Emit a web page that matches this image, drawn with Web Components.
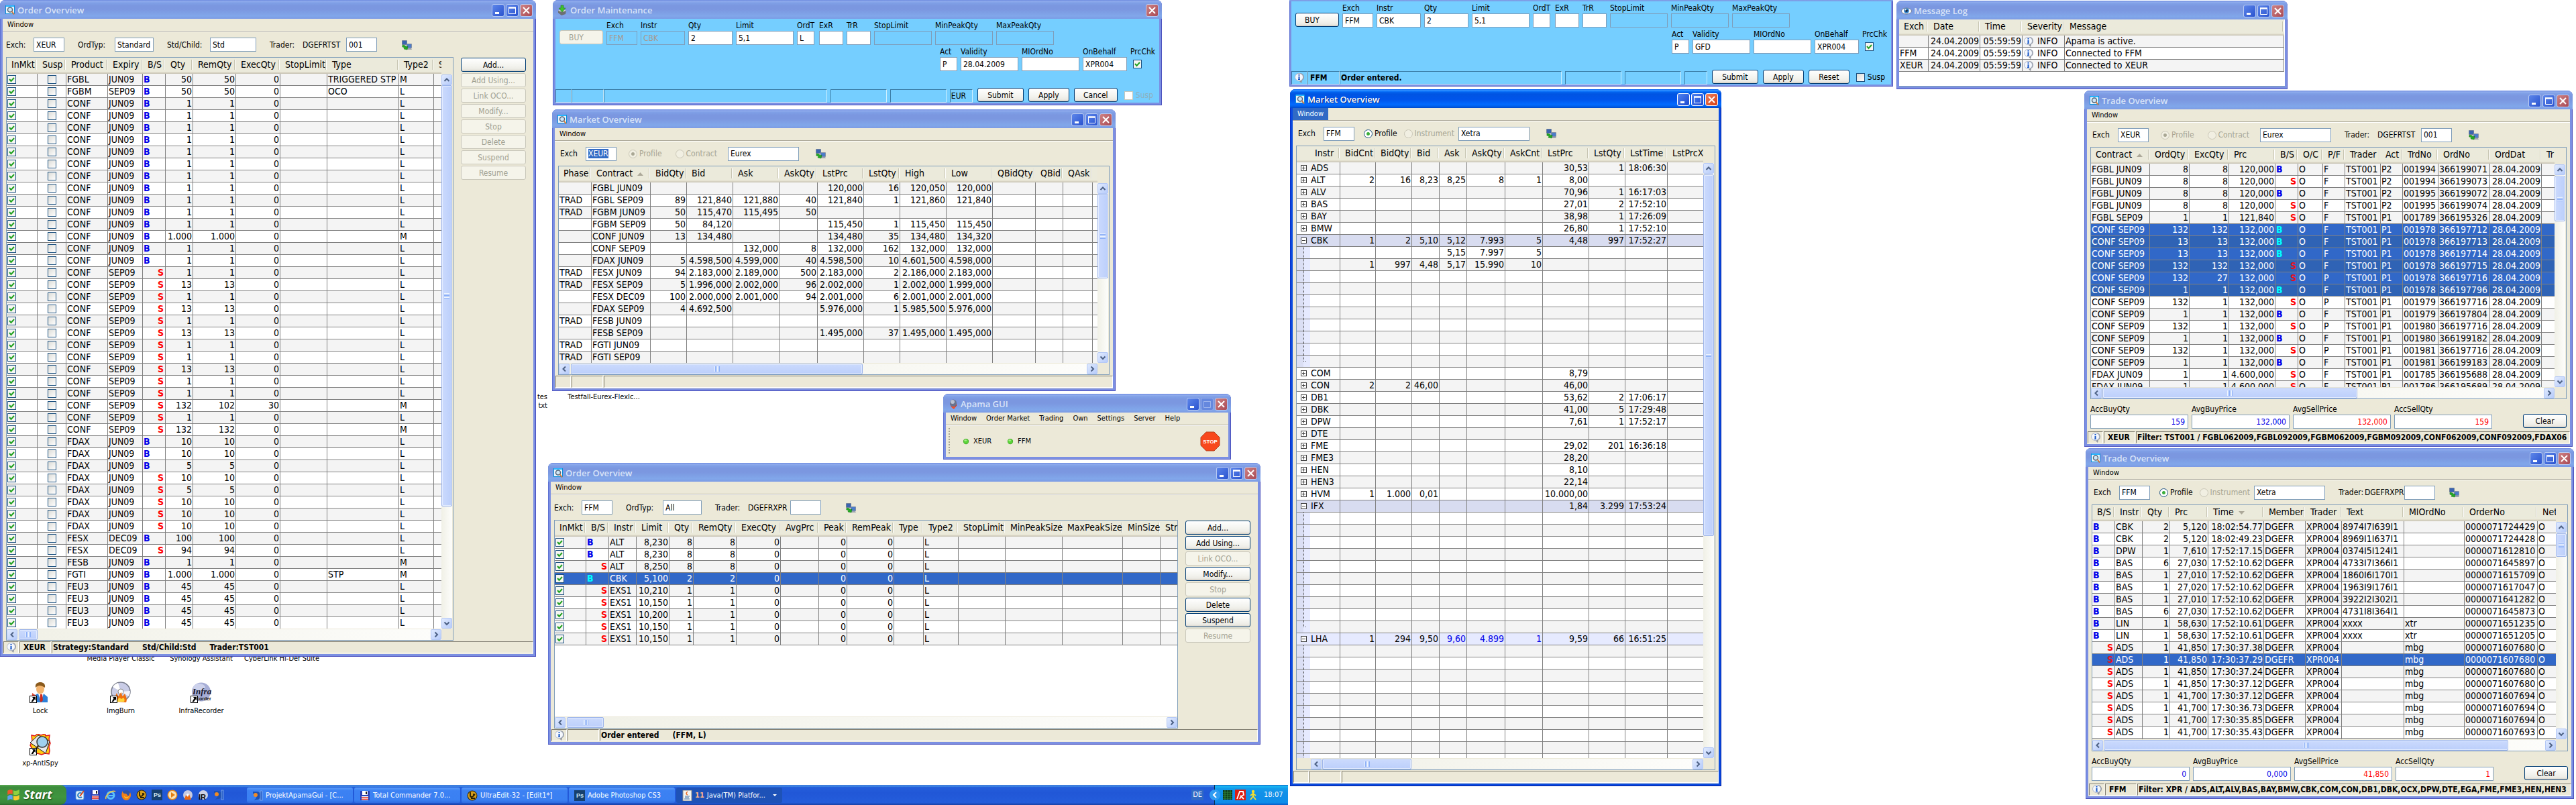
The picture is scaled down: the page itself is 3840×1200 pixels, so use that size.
<!DOCTYPE html>
<html lang="en">
<head>
<meta charset="utf-8">
<title>Trading Desktop</title>
<style>
html,body{margin:0;height:100%;background:#fff}
body{font-family:"DejaVu Sans Condensed","DejaVu Sans",sans-serif;font-size:12px;line-height:14px;color:#000;overflow:hidden}
</style>
</head>
<body>
<xp-desktop>
  <xp-shortcut label="tes" label2="txt" at="7 / 7" edge></xp-shortcut>
  <xp-shortcut label="Testfall-Eurex-FlexIc..." at="7 / 8"></xp-shortcut>
  <xp-shortcut label="Media Player Classic" at="12 / 2"></xp-shortcut>
  <xp-shortcut label="Synology Assistant" at="12 / 3"></xp-shortcut>
  <xp-shortcut label="CyberLink Hi-Def Suite" at="12 / 4"></xp-shortcut>
  <xp-shortcut label="Lock" icon="lock" at="13 / 1"></xp-shortcut>
  <xp-shortcut label="ImgBurn" icon="imgburn" at="13 / 2"></xp-shortcut>
  <xp-shortcut label="InfraRecorder" icon="infra" at="13 / 3"></xp-shortcut>
  <xp-shortcut label="xp-AntiSpy" icon="antispy" at="14 / 1"></xp-shortcut>

  <xp-window slot="win" name="Order Overview" icon="find" box="0 0 799 979">
    <xp-menu items="Window"></xp-menu>
    <xp-toolbar style="height:37px">
      <xp-field label="Exch:" value="XEUR" lw="41" iw="46"></xp-field>
      <xp-field label="OrdTyp:" value="Standard" lw="55" iw="58" style="margin-left:20px"></xp-field>
      <xp-field label="Std/Child:" value="Std" lw="64" iw="69" style="margin-left:20px"></xp-field>
      <xp-field label="Trader:" note="DGEFRTST" value="001" lw="49" nw="65" iw="46" style="margin-left:20px"></xp-field>
      <xp-icon name="net" style="margin-left:36px"></xp-icon>
    </xp-toolbar>
    <xp-split>
      <xp-grid data="ordersXeur" v="0 628" h="2 28"></xp-grid>
      <xp-actions slot="side" on="Add..."></xp-actions>
    </xp-split>
    <xp-status info code="XEUR"><span>Strategy:Standard</span><span>Std/Child:Std</span><span>Trader:TST001</span></xp-status>
  </xp-window>

  <xp-window slot="win" name="Order Maintenance" icon="order" box="824 0 908 157" controls="x" style="--body:#75ceff">
    <xp-order-form locked exch="FFM" ordt="L" validity="28.04.2009" ccy="EUR" last="Cancel"></xp-order-form>
  </xp-window>

  <xp-window slot="win" name="Market Overview" icon="find" box="823 163 840 420">
    <xp-menu items="Window"></xp-menu>
    <xp-toolbar>
      <xp-field label="Exch" value="XEUR" lw="38" iw="46" selected style="margin-left:3px"></xp-field>
      <xp-radio label="Profile" on off style="margin-left:18px"></xp-radio>
      <xp-radio label="Contract" off style="margin-left:20px"></xp-radio>
      <xp-field name="Profile name" value="Eurex" iw="106" style="margin-left:16px"></xp-field>
      <xp-icon name="net" style="margin-left:24px"></xp-icon>
    </xp-toolbar>
    <xp-split><xp-grid data="marketXeur" v="0 126" h="2 435"></xp-grid></xp-split>
    <xp-status></xp-status>
  </xp-window>

  <xp-window slot="win" name="Apama GUI" icon="apama" box="1406 587 429 98" controls="_mx">
    <xp-menu items="Window,Order Market,Trading,Own,Settings,Server,Help"></xp-menu>
    <xp-server-bar></xp-server-bar>
  </xp-window>

  <xp-window slot="win" name="Order Overview" icon="find" box="817 690 1062 420">
    <xp-menu items="Window"></xp-menu>
    <xp-toolbar style="height:37px">
      <xp-field label="Exch:" value="FFM" lw="41" iw="46"></xp-field>
      <xp-field label="OrdTyp:" value="All" lw="55" iw="58" style="margin-left:20px"></xp-field>
      <xp-field label="Trader:" note="DGEFRXPR" value="" lw="49" nw="63" iw="46" style="margin-left:20px"></xp-field>
      <xp-icon name="net" style="margin-left:36px"></xp-icon>
    </xp-toolbar>
    <xp-split>
      <xp-grid data="ordersFfm" h="2 55"></xp-grid>
      <xp-actions slot="side" on="Add...,Add Using...,Modify...,Delete,Suspend"></xp-actions>
    </xp-split>
    <xp-status info><span>Order entered</span><span>(FFM, L)</span></xp-status>
  </xp-window>

  <xp-window slot="win" name="Order Maintenance" icon="order" box="1922 -26 900 155" controls="x" style="--body:#75ceff;--frame:3px">
    <xp-order-form exch="FFM" ordt="" validity="GFD" code="FFM" message="Order entered." last="Reset" info></xp-order-form>
  </xp-window>

  <xp-window slot="win" active name="Market Overview" icon="find" box="1923 133 643 1039">
    <xp-menu items="Window" open></xp-menu>
    <xp-toolbar>
      <xp-field label="Exch" value="FFM" lw="38" iw="46" style="margin-left:3px"></xp-field>
      <xp-radio label="Profile" on style="margin-left:14px"></xp-radio>
      <xp-radio label="Instrument" off style="margin-left:10px"></xp-radio>
      <xp-field name="Profile name" value="Xetra" iw="106" style="margin-left:6px"></xp-field>
      <xp-icon name="net" style="margin-left:24px"></xp-icon>
    </xp-toolbar>
    <xp-split><xp-grid data="marketFfm" v="1 539" h="1 133" indent></xp-grid></xp-split>
    <xp-status></xp-status>
  </xp-window>

  <xp-window slot="win" name="Message Log" icon="eye" box="2827 1 583 132">
    <xp-grid data="log" bare></xp-grid>
  </xp-window>

  <xp-window slot="win" name="Trade Overview" icon="find" box="3107 135 728 531">
    <xp-menu items="Window"></xp-menu>
    <xp-toolbar>
      <xp-field label="Exch" value="XEUR" lw="38" iw="46" style="margin-left:3px"></xp-field>
      <xp-radio label="Profile" on off style="margin-left:18px"></xp-radio>
      <xp-radio label="Contract" off style="margin-left:20px"></xp-radio>
      <xp-field name="Profile name" value="Eurex" iw="106" style="margin-left:16px"></xp-field>
      <xp-field label="Trader:" note="DGEFRTST" value="001" lw="49" nw="65" iw="46" style="margin-left:20px"></xp-field>
      <xp-icon name="net" style="margin-left:24px"></xp-icon>
    </xp-toolbar>
    <xp-split><xp-grid data="tradesXeur" v="1 68" h="1 380"></xp-grid></xp-split>
    <xp-totals values="159,132.000,132.000,159"></xp-totals>
    <xp-status info code="XEUR"><span>Filter: TST001 / FGBL062009,FGBL092009,FGBM062009,FGBM092009,CONF062009,CONF092009,FDAX06</span></xp-status>
  </xp-window>

  <xp-window slot="win" name="Trade Overview" icon="find" box="3109 668 728 523">
    <xp-menu items="Window"></xp-menu>
    <xp-toolbar>
      <xp-field label="Exch" value="FFM" lw="38" iw="46" style="margin-left:3px"></xp-field>
      <xp-radio label="Profile" on style="margin-left:14px"></xp-radio>
      <xp-radio label="Instrument" off style="margin-left:10px"></xp-radio>
      <xp-field name="Profile name" value="Xetra" iw="106" style="margin-left:6px"></xp-field>
      <xp-field label="Trader:" note="DGEFRXPR" value="" lw="39" nw="59" iw="46" style="margin-left:20px"></xp-field>
      <xp-icon name="net" style="margin-left:20px"></xp-icon>
    </xp-toolbar>
    <xp-split><xp-grid data="tradesFfm" v="1 35" h="1 603"></xp-grid></xp-split>
    <xp-totals values="0,0.000,41.850,1"></xp-totals>
    <xp-status info code="FFM"><span>Filter: XPR / ADS,ALT,ALV,BAS,BAY,BMW,CBK,COM,CON,DB1,DBK,OCX,DPW,DTE,EGA,FME,FME3,HEN,HEN3</span></xp-status>
  </xp-window>

  <xp-taskbar slot="bar"></xp-taskbar>
</xp-desktop>

<script>
/* ---------- grid data: columns are "title:width:kind", rows are pipe separated ---------- */
const rep = (n, s) => Array(n).fill(s);
const ox = (p, e, s, q, t2 = 'L', t = '', r = q, x = '0') => `1|0|${p}|${e}|${s}|${q}|${r}|${x}||${t}|${t2}|`;
const DATA = {
  ordersXeur: {
    cols: 'InMkt:46:c,Susp:43:m,Product:62:l,Expiry:52:l,B/S:34:s,Qty:41:r,RemQty:64:r,ExecQty:66:r,StopLimit:70:r,Type:107:l,Type2:52:l,S:40:l',
    rows: [
      ox('FGBL','JUN09','B','50','M','TRIGGERED STP'), ox('FGBM','SEP09','B','50','L','OCO'),
      ...rep(11, ox('CONF','JUN09','B','1')), ox('CONF','JUN09','B','1.000','M'), ...rep(2, ox('CONF','JUN09','B','1')),
      ...['1','13','1','13','1','13','1','1','13','1','1'].map(q => ox('CONF','SEP09','S',q)),
      ox('CONF','SEP09','S','132','M','','102','30'), ox('CONF','SEP09','S','1'), ox('CONF','SEP09','S','132','M'),
      ...['10','10','5'].map(q => ox('FDAX','JUN09','B',q)), ...['10','5','10','10','10'].map(q => ox('FDAX','JUN09','S',q)),
      ox('FESX','DEC09','B','100'), ox('FESX','DEC09','S','94'), ox('FESB','JUN09','B','1','M'),
      ox('FGTI','JUN09','B','1.000','M','STP'), ...rep(4, ox('FEU3','JUN09','B','45'))
    ]
  },
  marketXeur: {
    cols: 'Phase:49:l,Contract ^:88:l,BidQty:54:r,Bid:69:r,Ask:69:r,AskQty:57:r,LstPrc:69:r,LstQty:54:r,High:69:r,Low:69:r,QBidQty:64:r,QBid:41:r,QAsk:44:r,:40:l',
    rows: `|FGBL JUN09|||||120,000|16|120,050|120,000
TRAD|FGBL SEP09|89|121,840|121,880|40|121,840|1|121,860|121,840
TRAD|FGBM JUN09|50|115,470|115,495|50
|FGBM SEP09|50|84,120|||115,450|1|115,450|115,450
|CONF JUN09|13|134,480|||134,480|35|134,480|134,320
|CONF SEP09|||132,000|8|132,000|162|132,000|132,000
|FDAX JUN09|5|4.598,500|4.599,000|40|4.598,500|10|4.601,500|4.598,000
TRAD|FESX JUN09|94|2.183,000|2.189,000|500|2.183,000|2|2.186,000|2.183,000
TRAD|FESX SEP09|5|1.996,000|2.002,000|96|2.002,000|1|2.002,000|1.999,000
|FESX DEC09|100|2.000,000|2.001,000|94|2.001,000|6|2.001,000|2.001,000
|FDAX SEP09|4|4.692,500|||5.976,000|1|5.985,500|5.976,000
TRAD|FESB JUN09
|FESB SEP09|||||1.495,000|37|1.495,000|1.495,000
TRAD|FGTI JUN09
TRAD|FGTI SEP09`.split('\n')
  },
  ordersFfm: {
    cols: 'InMkt:47:c,B/S:34:s,Instr:41:l,Limit:49:r,Qty:36:r,RemQty:64:r,ExecQty:66:r,AvgPrc:57:r,Peak:42:r,RemPeak:70:r,Type:44:l,Type2:52:l,StopLimit:70:r,MinPeakSize:85:r,MaxPeakSize:90:r,MinSize:56:r,Str:60:l',
    rows: [['B','ALT','8,230','8'],['B','ALT','8,230','8'],['S','ALT','8,250','8'],['B','CBK','5,100','2'],['S','EXS1','10,210','1'],
      ['S','EXS1','10,150','1'],['S','EXS1','10,200','1'],['S','EXS1','10,150','1'],['S','EXS1','10,150','1']]
      .map(([s,i,l,q]) => `1|${s}|${i}|${l}|${q}|${q}|0||0|0||L`),
    sel: [3]
  },
  marketFfm: {
    cols: 'Instr:65:t,BidCnt:53:r,BidQty:54:r,Bid:41:r,Ask:41:r,AskQty:57:r,AskCnt:56:r,LstPrc:69:r,LstQty:54:r,LstTime:63:r,LstPrcX:80:r',
    rows: [...`+ADS|||||||30,53|1|18:06:30
+ALT|2|16|8,23|8,25|8|1|8,00
+ALV|||||||70,96|1|16:17:03
+BAS|||||||27,01|2|17:52:10
+BAY|||||||38,98|1|17:26:09
+BMW|||||||26,80|1|17:52:10
-CBK|1|2|5,10|5,12|7.993|5|4,48|997|17:52:27
.||||5,15|7.997|5
.|1|997|4,48|5,17|15.990|10`.split('\n'), ...rep(7, '.'), '_',
      ...`+COM|||||||8,79
+CON|2|2|46,00||||46,00
+DB1|||||||53,62|2|17:06:17
+DBK|||||||41,00|5|17:29:48
+DPW|||||||7,61|1|17:52:17
+DTE
+FME|||||||29,02|201|16:36:18
+FME3|||||||28,20
+HEN|||||||8,10
+HEN3|||||||22,14
+HVM|1|1.000|0,01||||10.000,00
-IFX|||||||1,84|3.299|17:53:24`.split('\n'), ...rep(9, '.'), '_',
      '-LHA|1|294|9,50|~9,60|~4.899|~1|9,59|66|16:51:25', ...rep(10, '.')]
  },
  log: {
    cols: 'Exch:44:l,Date:77:r,Time:63:r,Severity:63:i,Message:327:l',
    rows: ['|24.04.2009|05:59:59|INFO|Apama is active.','FFM|24.04.2009|05:59:59|INFO|Connected to FFM','XEUR|24.04.2009|05:59:59|INFO|Connected to XEUR']
  },
  tradesXeur: {
    cols: 'Contract ^:88:l,OrdQty:59:r,ExcQty:59:r,Prc:69:r,B/S:34:s,O/C:37:l,P/F:33:l,Trader:53:l,Act:33:l,TrdNo:53:l,OrdNo:77:l,OrdDat:77:r,Tr:60:l',
    rows: `FGBL JUN09|8|8|120,000|B|F|P2|001994|366199071
FGBL JUN09|8|8|120,000|S|F|P2|001994|366199073
FGBL JUN09|8|8|120,000|B|F|P2|001995|366199072
FGBL JUN09|8|8|120,000|S|F|P2|001995|366199074
FGBL SEP09|1|1|121,840|S|F|P1|001789|366195326
CONF SEP09|132|132|132,000|B|F|P1|001978|366197712
CONF SEP09|13|13|132,000|B|F|P1|001978|366197713
CONF SEP09|13|13|132,000|B|F|P1|001978|366197714
CONF SEP09|132|132|132,000|S|F|P1|001978|366197715
CONF SEP09|132|27|132,000|S|P|P1|001978|366197716
CONF SEP09|1|1|132,000|B|F|P1|001978|366197796
CONF SEP09|132|1|132,000|S|P|P1|001979|366197716
CONF SEP09|1|1|132,000|B|F|P1|001979|366197804
CONF SEP09|132|1|132,000|S|P|P1|001980|366197716
CONF SEP09|1|1|132,000|B|F|P1|001980|366199182
CONF SEP09|132|1|132,000|S|P|P1|001981|366197716
CONF SEP09|1|1|132,000|B|F|P1|001981|366199183
FDAX JUN09|1|1|4.600,000|S|F|P1|001785|366195688
FDAX JUN09|1|1|4.600,000|S|F|P1|001786|366195689`.split('\n').map(r => {
      const [c,o,e,p,s,f,a,t,n] = r.split('|');
      return [c,o,e,p,s,'O',f,'TST001',a,t,n,'28.04.2009'].join('|');
    }),
    sel: [5,6,7,8,9,10]
  },
  tradesFfm: {
    cols: 'B/S:34:s,Instr:41:l,Qty:41:r,Prc:57:r,Time v:83:r,Member:62:l,Trader:54:l,Text:93:l,MIOrdNo:90:l,OrderNo:109:l,Net:60:l',
    rows: `B|CBK|2|5,120|18:02:54.77|8974I7I639I1||0000071724429
B|CBK|2|5,120|18:02:49.23|8969I1I637I1||0000071724428
B|DPW|1|7,610|17:52:17.15|0374I5I124I1||0000071612810
B|BAS|6|27,030|17:52:10.62|4733I7I366I1||0000071645897
B|BAS|1|27,010|17:52:10.62|1860I6I170I1||0000071615709
B|BAS|1|27,020|17:52:10.62|1963I9I176I1||0000071617047
B|BAS|1|27,010|17:52:10.62|3922I2I302I1||0000071641282
B|BAS|6|27,030|17:52:10.62|4731I8I364I1||0000071645873
B|LIN|1|58,630|17:52:10.61|xxxx|xtr|0000071651235
B|LIN|1|58,630|17:52:10.61|xxxx|xtr|0000071651205
S|ADS|1|41,850|17:30:37.38||mbg|0000071607680
S|ADS|1|41,850|17:30:37.29||mbg|0000071607680
S|ADS|1|41,850|17:30:37.24||mbg|0000071607680
S|ADS|1|41,850|17:30:37.12||mbg|0000071607680
S|ADS|1|41,700|17:30:37.12||mbg|0000071607694
S|ADS|1|41,700|17:30:36.73||mbg|0000071607694
S|ADS|1|41,700|17:30:35.85||mbg|0000071607694
S|ADS|1|41,700|17:30:35.43||mbg|0000071607693
S|ADS|1|41,700|17:18:58.81||mbg|0000071607688`.split('\n').map(r => {
      const [s,i,q,p,t,x,m,o] = r.split('|');
      return [s,i,q,p,t,'DGEFR','XPR004',x,m,o,'O'].join('|');
    }),
    sel: [11]
  }
};

/* ---------- icons ---------- */
const disc = (r, c) => `<circle cx="8" cy="8" r="${r}" fill="${c}"/>`;
const ICONS = {
  find: `<rect x="1" y="1" width="14" height="13" fill="#0a8fd8"/><rect x="2" y="3" width="12" height="10" fill="#eaf5fc"/><rect x="2" y="1" width="12" height="2" fill="#27b6ff"/><circle cx="8" cy="7.500" r="3.500" fill="#cfe6f5" stroke="#53657a" stroke-width="1.500"/><path d="M10.500 10l3.500 4.500" stroke="#d0763b" stroke-width="2"/>`,
  order: `<path d="M1 9l5-2 7 2-1 5-6 2-5-4z" fill="#6d6f72"/><path d="M1 9l6 2 6-2-6-3z" fill="#d7d9db"/><path d="M5 1h4v4h3l-5 6-5-6h3z" fill="#3fbf2e" stroke="#1c7d12" stroke-width=".6"/>`,
  apama: `<path d="M3 9l5 6 5-4V7z" fill="#d33218"/><ellipse cx="8" cy="7" rx="5" ry="5.500" fill="#68738f"/><ellipse cx="7" cy="5" rx="3" ry="3" fill="#b9c0d2"/><path d="M4 12l5 4 3-4z" fill="#f4502a"/>`,
  eye: `<ellipse cx="8" cy="8.500" rx="7.500" ry="4.500" fill="#fff" stroke="#6d7890"/><circle cx="8" cy="8" r="3.800" fill="#2f7fc6"/><circle cx="8" cy="8" r="1.800" fill="#0a1b33"/><circle cx="6.800" cy="6.500" r="1" fill="#fff"/>`,
  net: `<rect x="1" y="1" width="8" height="7" rx="1" fill="#71819b"/><rect x="2" y="2" width="6" height="5" fill="#3a64b0"/><path d="M2 9h6l1 2H1z" fill="#a9b2bd"/><rect x="8" y="6" width="8" height="7" rx="1" fill="#8390a5"/><rect x="9" y="7" width="6" height="5" fill="#4d7cc9"/><path d="M9 13h6l1 2H8z" fill="#9ba4ae"/><path d="M2 8l4 1 1 2 3-1-1 5-5-1 1-2-3-1z" fill="#22ab22" stroke="#0c700c" stroke-width=".5"/>`,
  info: `<path d="M8 1a6.500 6 0 1 0 0 12l3 3 1-4A6.500 6 0 0 0 8 1z" fill="#8f949e"/><ellipse cx="7.500" cy="7" rx="6" ry="5.500" fill="#f5f8fd" stroke="#a9b4c8" stroke-width=".8"/><path d="M7.500 3v1.800M7.500 6v4.500" stroke="#1253c5" stroke-width="2"/><path d="M6 10.500h3" stroke="#1253c5"/>`,
  led: disc(5.5, '#43a226') + disc(4.5, '#5bd43a') + `<ellipse cx="7" cy="6" rx="2.500" ry="1.800" fill="#a4f085"/>`,
  lock: `<path d="M5 31V22l7-4h9l6 5v8z" fill="#2d80d8"/><path d="M13 18l4 12 4-12z" fill="#fff"/><path d="M16 19h3l1 9-3 3-2-3z" fill="#cf2a1c"/><ellipse cx="16" cy="11" rx="6" ry="7.500" fill="#f3b46e"/><path d="M9 9c-1-6 3-8 7-8s8 2 7 8c-3-2-6-3-8-3s-4 1-6 3z" fill="#8a5a1c"/><path d="M4 17l6 4-1 8-6 0z" fill="#de4a36"/>`,
  imgburn: `<circle cx="16" cy="15" r="14" fill="#c9cce6" stroke="#777b8b" stroke-width="1.500"/><path d="M16 15L4 8A14 14 0 0 1 12 2z" fill="#fff"/><path d="M16 15l12 7a14 14 0 0 0 2-8z" fill="#f4f4fd"/><circle cx="16" cy="15" r="4" fill="#fff" stroke="#888"/><path d="M8 30c-1-7 1-11 2-13 1 3 2 4 3 5 1-3 2-5 4-6 0 3 1 5 2 6l3-4c2 4 4 9 2 13z" fill="#ef6f10"/><path d="M11 30c0-4 2-5 3-6l3 2 3-2c2 2 2 4 1 6z" fill="#ffd43a"/>`,
  infra: `<circle cx="16" cy="15.500" r="14" fill="#a7aed6"/><ellipse cx="13" cy="9" rx="9" ry="6" fill="#cdd2ec"/><text x="3" y="19" font-family="Liberation Serif" font-size="13" font-style="italic" font-weight="700" fill="#15162e">Infra</text><text x="9" y="28" font-family="Liberation Sans" font-size="7" font-weight="700" fill="#111">corder</text>`,
  antispy: `<path d="M3 2l5 1 4-3 5 2 6-2 1 3 6-1-1 6 2 6-2 5 1 6-1 5-6-1-5 2-6-2-5 1-4-2 1-6-3-5 3-6z" fill="#ffcc10" stroke="#e01b1b" stroke-width="1.500"/><path d="M1 13L13 2l17 9-6 18z" fill="#e9e9e9" stroke="#222"/><circle cx="19" cy="12" r="8" fill="#9fd0ee" stroke="#333" stroke-width="1.500"/><path d="M13 18l-6 8" stroke="#513b12" stroke-width="3"/>`,
  flag: `<g transform="skewY(-8) translate(0 1)"><path d="M1 3q3-2 6 0v5q-3-2-6 0z" fill="#f0592a"/><path d="M8 3.500q3 2 7 0v5q-4 2-7 0z" fill="#8fd13f"/><path d="M1 9.500q3-2 6 0v5q-3-2-6 0z" fill="#5fa0f2"/><path d="M8 10q3 2 7 0v5q-4 2-7 0z" fill="#fbca2e"/></g>`,
  edit: `<rect x="2" y="2" width="12" height="13" rx="2" fill="#e9f3fb" stroke="#4a92cc"/><path d="M11 6a3.500 3.500 0 1 0 0 5" fill="none" stroke="#2c80c4" stroke-width="2"/><path d="M8 10l6-8" stroke="#d4481f" stroke-width="2"/>`,
  floppy: `<rect x="1" y="1" width="14" height="14" fill="#2b3fb5"/><rect x="4" y="1" width="8" height="6" fill="#fff"/><rect x="9" y="2" width="2" height="4" fill="#222"/><rect x="3" y="9" width="10" height="6" fill="#fff"/><path d="M3 11h10M3 13.500h10" stroke="#e0342a" stroke-width="1.500"/>`,
  ie: `<circle cx="8" cy="8.500" r="5" fill="none" stroke="#5cc3fb" stroke-width="3"/><path d="M5 9h8" stroke="#5cc3fb" stroke-width="2"/><path d="M1 14C-1 9 10 0 15 3" fill="none" stroke="#f9c937" stroke-width="1.500"/>`,
  fox: disc(7, '#2c55a8') + `<path d="M3 2c0 3 1 4 4 4s2 4 5 3l2-5c3 6-1 12-6 12S-1 9 3 2z" fill="#f08019"/><path d="M5 9c1 3 5 3 7 1-1 4-7 4-7-1z" fill="#fbd02f"/>`,
  ue: disc(7.5, '#30260a') + disc(6.5, '#d59d1b') + `<path d="M5 3v5q0 2 2 2t3-2V5M6 12h6M9 9l3-3" fill="none" stroke="#2a1e05" stroke-width="1.800"/>`,
  ps: `<rect x="0" y="0" width="16" height="16" fill="#16406e"/><text x="3" y="11" font-family="Liberation Sans" font-size="9" font-weight="700" fill="#d5ecfa">Ps</text>`,
  play: disc(7.5, '#e88a18') + disc(6, '#fbe3b6') + `<path d="M6 4l6 4-6 4z" fill="#e57e0f"/>`,
  burn: disc(7, '#c8cbe2') + disc(2, '#fff') + `<path d="M3 15l2-7 3 3 2-4 3 8z" fill="#ee6a12"/>`,
  ir: disc(7, '#cdd2e4') + `<text x="1" y="15" font-family="Liberation Sans" font-size="11" font-weight="700" fill="#0a0a0a">IR</text>`,
  jd: `<path d="M1 2h7a5 6 0 0 1-1 12l-5 1c4-2 5-5 4-7s-4-3-5-3z" fill="#1d50b0"/><circle cx="5" cy="7" r="3" fill="#f08a24"/><rect x="12" y="1" width="3" height="14" fill="#2d63cb" stroke="#9cc1f5" stroke-width=".6"/>`,
  java: `<rect x="2" y="0" width="13" height="16" fill="#f4f4f0" stroke="#8a8a86"/><path d="M9 2q-4 3 0 5" fill="none" stroke="#e8641c" stroke-width="1.500"/><path d="M5 9h7M5 11h6M4 13h8" stroke="#3c6fa5" stroke-width="1.200"/>`,
  meter: `<rect x="1" y="1" width="14" height="14" fill="#0c2e12"/><path d="M1 4h14M1 7h14M1 10h14M1 13h14M4 1v14M8 1v14M12 1v14" stroke="#2f8b3c"/>`,
  avira: `<rect width="16" height="16" fill="#dd1c12"/><path d="M3 14l4-11h5l1 5q-4 1-6 6M8 9l5 5" fill="none" stroke="#fff" stroke-width="1.800"/>`,
  man: `<circle cx="8" cy="3" r="2.200" fill="#f7e02c"/><path d="M8 5v5l-4 5M8 10l4 5M4 9l4-3 4 3" fill="none" stroke="#f7e02c" stroke-width="2"/>`,
  less: `<circle cx="8" cy="8" r="8" fill="#2f9cf2"/><path d="M10 4L6 8l4 4" fill="none" stroke="#fff" stroke-width="2"/>`
};
const svg = (n, s = 16, v = 16) => `<svg width="${s}" height="${s}" viewBox="0 0 ${v} ${v}" aria-hidden="true">${ICONS[n] || ''}</svg>`;

/* ---------- shared control styles ---------- */
const CONTROLS = `
*{box-sizing:border-box}
button,input{font:inherit;color:inherit;margin:0}
input[type=text]{height:21px;border:1px solid #7f9db9;background:#fff;padding:0 3px;outline:0;display:block;min-width:0}
input[type=text]::selection{background:#316ac5;color:#fff}
input[type=checkbox]{appearance:none;width:13px;height:13px;border:1px solid #1c5180;background:#fff linear-gradient(135deg,#dcdcd7,#fff);display:block;flex:none}
input[type=checkbox]:checked{background:url("data:image/svg+xml,%3Csvg xmlns='http://www.w3.org/2000/svg' viewBox='0 0 11 11'%3E%3Cpath d='M2 5l2.500 3L9 3' fill='none' stroke='%2321a121' stroke-width='2'/%3E%3C/svg%3E") #f6f6f3}
input[type=checkbox]:disabled{border-color:#cac8bb;background:#fff}
.btn{height:21px;border:1px solid #003c74;border-radius:3px;background:linear-gradient(#fff,#f3f3ee 60%,#ecebe5 85%,#d6d0c5);padding:0;text-align:center}
.btn:disabled{border-color:#c9c7ba;background:#f5f4ea;color:#a1a192}`;
const make = (name, css, render, after) => customElements.define(name, class extends HTMLElement {
  connectedCallback() {
    if (this.shadowRoot) return;
    const root = this.attachShadow({ mode: 'open' });
    const t = document.createElement('template');
    t.innerHTML = `<style>${CONTROLS}${css}</style>${render(this, (k, d = '') => this.getAttribute(k) ?? d)}`;
    root.append(t.content.cloneNode(true));
    after?.(this, root);
  }
});

make('xp-icon', `:host{display:block;width:16px;height:16px;flex:none}svg{display:block}`, (el, a) => svg(a('name')));

make('xp-desktop', `:host{display:flex;flex-direction:column;position:relative;height:100vh;overflow:hidden}
.icons{flex:1;min-height:0;display:grid;grid-template-columns:repeat(8,120px);grid-template-rows:repeat(14,78px);padding-top:80px}
.bar{width:50%}`,
  () => `<div class="icons"><slot></slot></div><slot name="win"></slot><div class="bar"><slot name="bar"></slot></div>`);

make('xp-shortcut', `:host{display:block;font-size:11px;line-height:13px;text-align:center}
.pic{height:32px;margin-bottom:5px;display:flex;justify-content:center;position:relative}
.arrow{position:absolute;left:44px;bottom:0;width:11px;height:11px;background:#fff;border:1px solid #000}
.arrow svg{display:block}
:host([edge]) .t{text-align:right;padding-right:24px}`,
  (el, a) => `<div class="pic">${a('icon') ? svg(a('icon'), 32, 32) + `<span class="arrow"><svg width="9" height="9" viewBox="0 0 9 9"><path d="M3 1h5v5L6.500 4.500 4 8H1.500l3-5z"/></svg></span>` : ''}</div><div class="t">${a('label')}${a('label2') ? '<br>' + a('label2') : ''}</div>`,
  el => { el.style.gridArea = el.getAttribute('at'); });

make('xp-window', `:host{position:absolute;display:flex;flex-direction:column;border-radius:8px 8px 0 0;overflow:hidden;
background:#7b8fe2;box-shadow:inset -1px -1px #4b50bd,inset 1px 0 #5c70d2}
:host([active]){background:#0a4be0;box-shadow:inset -1px -1px #001b9a,inset 1px 0 #0a2fc8}
header{flex:none;height:28px;display:flex;align-items:center;gap:2px;padding:2px 5px 0 7px;
background:linear-gradient(#6f8ce0,#8fabec 8%,#7f9fe6 16%,#7b97e0 30%,#7b97e0 50%,#81a7ea 85%,#7c9be4)}
:host([active]) header{background:linear-gradient(#0058ee,#3593ff 6%,#127dff 10%,#0262ee 16%,#0054e3 26%,#0055eb 56%,#026afe 80%,#0062ef 90%,#0048c8)}
h2{flex:1;margin:0 0 0 1px;font:600 13px/18px "Open Sans",sans-serif;color:#d8e4f8}
:host([active]) h2{color:#fff;text-shadow:1px 1px #0a2a80}
header button{width:19px;height:19px;padding:0;border:1px solid #b9cbf3;border-radius:3px;background:linear-gradient(135deg,#5d86ea,#2a53cf);display:block}
header button.x{background:linear-gradient(135deg,#cf8283,#a94a55)}
header button.dim{border-color:#94abe9;background:#6588de}
:host([active]) header button{border-color:#fff;background:linear-gradient(135deg,#4f83f0,#1c48d0)}
:host([active]) header button.x{background:linear-gradient(135deg,#f0805c,#d53f14)}
header button svg{display:block}
section{flex:1;min-height:0;margin:0 var(--frame,4px) var(--frame,4px);background:var(--body,#ece9d8);display:flex;flex-direction:column}`,
  (el, a) => {
    const glyph = { _: ['Minimize', '<path d="M4 12.500h6" stroke-width="3"/>', ''], o: ['Maximize', '<path d="M3.500 4v9.500h10V4" /><path d="M3 4.500h11" stroke-width="2.500"/>', ''], m: ['Maximize', '<path d="M3.500 4v9.500h10V4M3 4.500h11" stroke="#9bb2ec"/>', 'dim'], x: ['Close', '<path d="M4 4l9 9M13 4l-9 9" stroke-width="2"/>', 'x'] };
    return `<header>${svg(a('icon'))}<h2>${a('name')}</h2>${[...a('controls', '_ox')].map(c => `<button class="${glyph[c][2]}" aria-label="${glyph[c][0]}"><svg width="17" height="17" viewBox="0 0 17 17" fill="none" stroke="#fff">${glyph[c][1]}</svg></button>`).join('')}</header><section><slot></slot></section>`;
  },
  el => { const [x, y, w, h] = el.getAttribute('box').split(' '); Object.assign(el.style, { left: x + 'px', top: y + 'px', width: w + 'px', height: h + 'px' }); });

make('xp-menu', `:host{display:block;flex:none}
nav{display:flex;height:20px;border-bottom:1px solid #fff;box-shadow:inset 0 -1px #aca899;font-size:11px}
button{border:0;background:none;padding:0 7px;height:18px}
:host([open]) button{background:#316ac5;color:#fff}`,
  (el, a) => `<nav>${a('items').split(',').map(i => `<button>${i}</button>`).join('')}</nav>`);

make('xp-toolbar', `:host{display:flex;flex:none;align-items:center;height:36px;padding:0 5px}`, () => `<slot></slot>`);

make('xp-field', `:host{display:flex;align-items:center;flex:none}label,span{flex:none;white-space:nowrap}
:host([stack]){flex-direction:column;align-items:stretch}
input:disabled{background:transparent;color:#a8988c}
:host([right]) input{text-align:right;padding-right:4px;color:var(--ink)}`,
  (el, a) => `${a('label') ? `<label for="f"${a('lw') ? ` style="width:${a('lw')}px"` : ' style="line-height:15px;width:0"'}>${a('label')}</label>` : ''}${a('note') ? `<span style="width:${a('nw')}px">${a('note')}</span>` : ''}<input type="text" id="f" value="${a('value')}"${a('label') ? '' : ` aria-label="${a('name')}"`} style="width:${a('iw')}px"${el.hasAttribute('off') ? ' disabled' : ''}>`,
  (el, r) => { if (el.hasAttribute('selected')) { const i = r.querySelector('input'); i.focus({ preventScroll: true }); i.select(); } });

make('xp-radio', `:host{display:flex;flex:none}label{display:flex;align-items:center;gap:3px}
input{appearance:none;width:13px;height:13px;border:1px solid #1c5180;border-radius:50%;background:#fff}
input:checked{background:radial-gradient(circle,#3cae3c 0 2px,#fff 3px)}
:host([off]){color:#a7a593}:host([off]) input{border-color:#c9c6b6;background:#f1efe2}
:host([off]) input:checked{background:radial-gradient(circle,#a9a794 0 2px,#f1efe2 3px)}`,
  el => `<label><input type="radio"${el.hasAttribute('on') ? ' checked' : ''}${el.hasAttribute('off') ? ' disabled' : ''}>${el.getAttribute('label')}</label>`);

make('xp-split', `:host{display:flex;flex:1;min-height:0;padding:0 5px;gap:11px}::slotted(xp-grid){flex:1;min-width:0}::slotted([slot=side]){margin-right:6px}`,
  () => `<slot></slot><slot name="side"></slot>`);

make('xp-actions', `:host{display:flex;flex-direction:column;gap:2px;width:97px;flex:none;padding-top:1px}`,
  (el, a) => { const on = a('on').split(','); return ['Add...', 'Add Using...', 'Link OCO...', 'Modify...', 'Stop', 'Delete', 'Suspend', 'Resume'].map(b => `<button class="btn"${on.includes(b) ? '' : ' disabled'}>${b}</button>`).join(''); });

/* scroll bar: at="offset length" of the thumb */
make('xp-scroll', `:host{display:flex;background:linear-gradient(90deg,#f0f0e6,#fdfdfb)}:host([dir=v]){flex-direction:column}
button{flex:none;width:16px;height:16px;padding:0;border:1px solid #b4c8f6;border-radius:2px;background:linear-gradient(135deg,#e0eafe,#b6cbfa)}
button svg{display:block}
:host([dir=h]) svg{transform:rotate(-90deg)}
.thumb{border:1px solid #9cb4ea;box-shadow:inset 0 0 0 1px #e3ecff;border-radius:2px;background:linear-gradient(90deg,#cbdafd,#bccffb);display:flex;align-items:center;justify-content:center;flex:none}
:host([dir=h]) .thumb{height:16px;background:linear-gradient(#cbdafd,#bccffb)}:host([dir=v]) .thumb{width:16px}
i{display:block;width:8px;height:8px;background:repeating-linear-gradient(#eef4fe 0 1px,#8cb0f8 1px 2px)}
:host([dir=h]) i{background:repeating-linear-gradient(90deg,#eef4fe 0 1px,#8cb0f8 1px 2px)}
b{flex:1}`,
  (el, a) => { const [o, l] = a('at').split(' '); const h = a('dir') === 'h'; const ar = d => `<svg width="14" height="14" viewBox="0 0 14 14" fill="none" stroke="#4d6185" stroke-width="2"><path d="${d}"/></svg>`;
    return `<button aria-label="Back">${ar('M3.500 9L7 5.500 10.500 9')}</button><div class="thumb" style="margin-${h ? 'left' : 'top'}:${o}px;${h ? 'width' : 'height'}:${l}px"><i></i></div><b></b><button aria-label="Forward">${ar('M3.500 5.500L7 9l3.500-3.500')}</button>`; });

make('xp-grid', `:host{display:grid;grid-template-columns:minmax(0,1fr) auto;grid-template-rows:minmax(0,1fr) auto;border:1px solid #7f9db9;background:#ece9d8;font-size:14px}
:host([bare]){border-width:0 0 1px;flex:1;min-height:0}
.view{overflow:hidden;background:#fff}
.side{width:17px;display:flex;flex-direction:column;padding-top:25px}
.side xp-scroll{flex:1;width:16px}
.foot{height:17px;padding-top:1px}
:host([indent]) .foot{padding-left:21px}
table{border-collapse:separate;border-spacing:0;table-layout:fixed;width:0}
th,td{padding:0;overflow:hidden;white-space:nowrap;text-align:left}
th{height:24px;font-weight:400;line-height:17px;padding:0 0 3px 7px;background:linear-gradient(#c7c5b2,#c7c5b2) right 2px top 3px/1px 15px no-repeat,linear-gradient(#fff,#fff) right 1px top 3px/1px 15px no-repeat,linear-gradient(#ebeadb 0 21px,#e2decd 21px 22px,#d6d2c2 22px 23px,#cbc7b8 23px)}
th svg{margin-left:7px;vertical-align:1px}
td{height:18px;line-height:17px;border:solid #808080;border-width:0 1px 1px 0;padding-left:1px}
tr:nth-child(odd) td{background:#f4f4f4}
.r{text-align:right;padding-right:1px}
.B{color:#0000e8;font-weight:700}.S{color:#f00;font-weight:700;text-align:right;padding-right:2px}
.m input{margin:0 auto}
.ink{color:#0000e8}
tr.on td{background:#3168c8;color:#fff}tr.on:nth-child(odd) td{background:#2f63b5}tr.on td.B{color:#0ff}tr.on td.S{color:#e8101c}
tr.open td{background:#e6eaff}tr.open:nth-child(odd) td{background:#d8dcf0}
td.t{padding:0}
.t div{display:flex;height:17px;align-items:center}
.t .g{width:20px;height:17px;flex:none;display:flex;align-items:center;justify-content:center;margin-right:1px}
.t button{width:9px;height:9px;padding:0;border:1px solid #404040;background:linear-gradient(#404040,#404040) center/5px 1px no-repeat,#fff}
.t button.plus{background:linear-gradient(#404040,#404040) center/5px 1px no-repeat,linear-gradient(#404040,#404040) center/1px 5px no-repeat,#fff}
.t .kid{background:linear-gradient(90deg,transparent 10px,#e6eaff 10px),#dbdff4}
.t .kid::before{content:"";width:1px;height:17px;background:repeating-linear-gradient(#444 0 1px,transparent 1px 2px)}
.t .last::before{width:6px;height:9px;margin:0 -6px 9px 0;background:repeating-linear-gradient(#444 0 1px,transparent 1px 2px) left/1px 100% no-repeat,repeating-linear-gradient(90deg,#444 0 1px,transparent 1px 3px) bottom/100% 1px no-repeat}
.i div{display:flex;align-items:center;gap:5px;height:17px}`,
  (el, a) => {
    const d = DATA[a('data')], cols = d.cols.split(',').map(c => c.split(':'));
    const arrow = s => s.endsWith(' ^') ? s.slice(0, -2) + '<svg width="9" height="5"><path d="M0 5h9L4.500 0z" fill="#aca899"/></svg>' : s.endsWith(' v') ? s.slice(0, -2) + '<svg width="9" height="5"><path d="M0 0h9L4.500 5z" fill="#aca899"/></svg>' : s;
    const cell = (v, k, t) => {
      if (k === 'c' || k === 'm') return `<td class="${k}"><input type="checkbox" aria-label="${t}"${v === '1' ? ' checked' : ''}></td>`;
      if (k === 's') return `<td class="${v}">${v}</td>`;
      if (k === 'i') return `<td class="i"><div>${svg('info')}<span>${v}</span></div></td>`;
      if (k === 't') return v[0] === '.' || v[0] === '_' ? `<td class="t"><div><span class="g kid${v[0] === '_' ? ' last' : ''}"></span></div></td>`
        : `<td class="t"><div><span class="g"><button class="${v[0] === '+' ? 'plus' : ''}" aria-label="Toggle ${v.slice(1)}"></button></span>${v.slice(1)}</div></td>`;
      return v[0] === '~' ? `<td class="${k} ink">${v.slice(1)}</td>` : `<td class="${k}">${v}</td>`;
    };
    const body = d.rows.map((r, i) => { const v = r.split('|'); return `<tr class="${d.sel?.includes(i) ? 'on' : ''}${v[0][0] === '-' ? ' open' : ''}">${cols.map((c, j) => cell(v[j] ?? '', c[2], c[0])).join('')}</tr>`; }).join('');
    return `<div class="view"><table style="width:${cols.reduce((s, c) => s + +c[1], 0)}px"><colgroup>${cols.map(c => `<col style="width:${c[1]}px">`).join('')}</colgroup><thead><tr>${cols.map(c => `<th${c[2] === 't' ? ' style="padding-left:27px"' : ''}>${arrow(c[0])}</th>`).join('')}</tr></thead><tbody>${body}</tbody></table></div>`
      + (a('v') ? `<div class="side"><xp-scroll dir="v" at="${a('v')}"></xp-scroll></div>` : '<div></div>')
      + (a('h') ? `<div class="foot"><xp-scroll dir="h" at="${a('h')}"></xp-scroll></div>` : '');
  });

const SUNK = `.c{height:18px;border:1px solid;border-color:#807d70 #fff #fff #807d70;display:flex;align-items:center;padding-left:3px;min-width:0;white-space:nowrap;overflow:hidden;flex:none}`;
make('xp-status', `:host{display:flex;flex:none;height:19px;padding-top:1px;gap:1px;font-weight:700}
${SUNK}.i{width:23px;margin-left:1px}.k{width:47px;padding-left:5px}.t{flex:1;gap:20px;padding-left:1px}`,
  (el, a) => `<div class="c i">${el.hasAttribute('info') ? svg('info') : ''}</div><div class="c k">${a('code')}</div><div class="c t"><slot></slot></div>`);

make('xp-totals', `:host{display:flex;flex:none;height:44px;padding:0 5px 3px;gap:5px;align-items:flex-end}
.btn{width:65px;margin-left:auto;margin-bottom:1px}.red{--ink:#f00}.blue{--ink:#0000e8}`,
  (el, a) => { const v = a('values').split(',').map(s => s.replace('.', ',')); return ['AccBuyQty', 'AvgBuyPrice', 'AvgSellPrice', 'AccSellQty'].map((l, i) => `<xp-field stack right class="${i < 2 ? 'blue' : 'red'}" label="${l}" value="${v[i]}" iw="146"></xp-field>`).join('') + `<button class="btn">Clear</button>`; });

make('xp-order-form', `:host{display:flex;flex-direction:column;flex:1;min-height:0}
.row{display:flex;align-items:flex-end;gap:5px;padding:3px 6px 0}.end{justify-content:flex-end}
.buy{width:65px;margin-bottom:1px;text-align:left;padding-left:13px}
.chk{display:flex;flex-direction:column;width:37px;line-height:15px;gap:4px;height:36px;white-space:nowrap}.chk input{margin-left:4px}
.foot{display:flex;align-items:flex-end;margin-top:auto;padding-right:9px}
${SUNK}.c{height:20px;border-color:#3a7ca5 #cdefff #cdefff #3a7ca5}
.foot .btn{margin:0 0 1px 7px;width:61px}.foot .w{width:69px}.foot .v{width:65px}
.susp{display:flex;align-items:center;gap:4px;margin:0 0 4px 10px}.dim{color:#8fb0be}b.c{font-weight:700}`,
  (el, a) => {
    const lock = el.hasAttribute('locked'), off = lock ? ' off' : '';
    const f = (l, v, w, o = '', s = '') => `<xp-field stack label="${l}" value="${v}" iw="${w}"${o}${s}></xp-field>`;
    return `<div class="row"><button class="btn buy"${lock ? ' disabled' : ''}>BUY</button>${f('Exch', 'FFM', 46, off)}${f('Instr', 'CBK', 66, off)}${f('Qty', '2', 66)}${f('Limit', '5,1', 86)}${f('OrdT', a('ordt'), 26, '', ' style="width:28px"')}${f('ExR', '', 36)}${f('TrR', '', 36)}${f('StopLimit', '', 86, ' off')}${f('MinPeakQty', '', 86, ' off')}${f('MaxPeakQty', '', 86, ' off')}</div>
    <div class="row end">${f('Act', 'P', 26)}${f('Validity', a('validity'), 86)}${f('MIOrdNo', '', 86)}${f('OnBehalf', 'XPR004', 66)}<div class="chk"><label for="p">PrcChk</label><input type="checkbox" id="p" checked></div></div>
    <div class="foot"><div class="c" style="width:24px">${el.hasAttribute('info') ? svg('info') : ''}</div><b class="c" style="width:48px">${a('code')}</b><b class="c" style="flex:1;padding-left:1px">${a('message')}</b><div class="c" style="width:84px;margin-left:5px"></div><div class="c" style="width:84px;margin-left:5px"></div><div class="c" style="width:34px;margin-left:5px;padding-left:1px">${a('ccy')}</div><button class="btn w">Submit</button><button class="btn">Apply</button><button class="btn${lock ? ' v' : ''}">${a('last')}</button><label class="susp${lock ? ' dim' : ''}"><input type="checkbox"${lock ? ' disabled' : ''}>Susp</label></div>`;
  });

make('xp-server-bar', `:host{display:flex;flex:1;align-items:center;padding:0 12px 0 4px;font-size:11px}
.grip{width:2px;height:40px;background:repeating-linear-gradient(#a5a294 0 2px,transparent 2px 4px);margin-right:18px}
.led{display:flex;align-items:center;gap:5px;width:66px}.led svg{width:12px;height:12px}
.stop{margin-left:auto;border:0;background:none;padding:0;width:30px;height:30px}`,
  () => `<span class="grip"></span><span class="led">${svg('led')}XEUR</span><span class="led">${svg('led')}FFM</span><button class="stop"><svg width="30" height="30" viewBox="0 0 30 30"><path d="M9 1h12l8 8v12l-8 8H9l-8-8V9z" fill="#f8481c" stroke="#b3421f"/><text x="15" y="18" font-family="Liberation Sans" font-weight="700" font-size="8" text-anchor="middle" fill="#fff">STOP</text></svg></button>`);

make('xp-taskbar', `:host{display:flex;position:relative;height:30px;color:#fff;font-size:11px;background:linear-gradient(#3168d5,#4993e6 6%,#245edb 12%,#2157d7 40%,#245ddb 88%,#1941a5)}
.start{width:99px;border:0;padding:0 0 2px 10px;border-radius:0 9px 9px 0;background:linear-gradient(#5eac56,#3c8c3c 10%,#3f953f 60%,#38883a 90%,#2c6a2c);display:flex;align-items:center;gap:5px;font:italic 700 18px/26px "Open Sans",sans-serif;text-shadow:1px 1px 2px #123f12}
.quick{display:flex;gap:7px;align-items:center;padding-left:12px;flex:none}.quick svg,.t svg,.tray svg{display:block;flex:none}
.tasks{display:flex;gap:2px;padding:4px 0 3px 34px;flex:1}
.t{width:158px;flex:none;border:0;border-radius:3px;background:linear-gradient(#5a9cf8,#3c81f3 20%,#3a80f2 80%,#2f6be0);display:flex;align-items:center;gap:4px;padding:0 8px;text-align:left;white-space:nowrap}
.t.on{background:#1e52b7}.t.on b{color:#ffb48a;font-weight:700}.t.on i{margin:3px 0 0 auto;border:3px solid transparent;border-top-color:#fff}
.de{align-self:center;background:#316ac5;padding:1px 2px;margin-right:16px}
.tray{width:110px;display:flex;align-items:center;gap:3px;background:linear-gradient(#0c59b9,#139ee9 4%,#18b5f2 8%,#139beb 18%,#1290e8 40%,#0d8dea 88%,#095bc9);border-left:1px solid #092e51}
.tray svg:first-child{margin-left:-8px}.tray time{margin-left:5px}`,
  () => {
    const t = (i, s) => `<button class="t">${svg(i)}${s}</button>`;
    return `<button class="start">${svg('flag', 20)}Start</button><div class="quick">${['edit', 'floppy', 'ie', 'fox', 'ue', 'ps', 'play', 'burn', 'ir', 'jd'].map(i => svg(i)).join('')}</div>
    <div class="tasks">${t('jd', 'ProjektApamaGui - [C...')}${t('floppy', 'Total Commander 7.0...')}${t('ue', 'UltraEdit-32 - [Edit1*]')}${t('ps', 'Adobe Photoshop CS3')}<button class="t on">${svg('java')}<b>11</b> Java(TM) Platfor...<i></i></button></div>
    <span class="de">DE</span><div class="tray">${['less', 'meter', 'avira', 'man'].map(i => svg(i)).join('')}<time>18:07</time></div>`;
  });
</script>
</body>
</html>
